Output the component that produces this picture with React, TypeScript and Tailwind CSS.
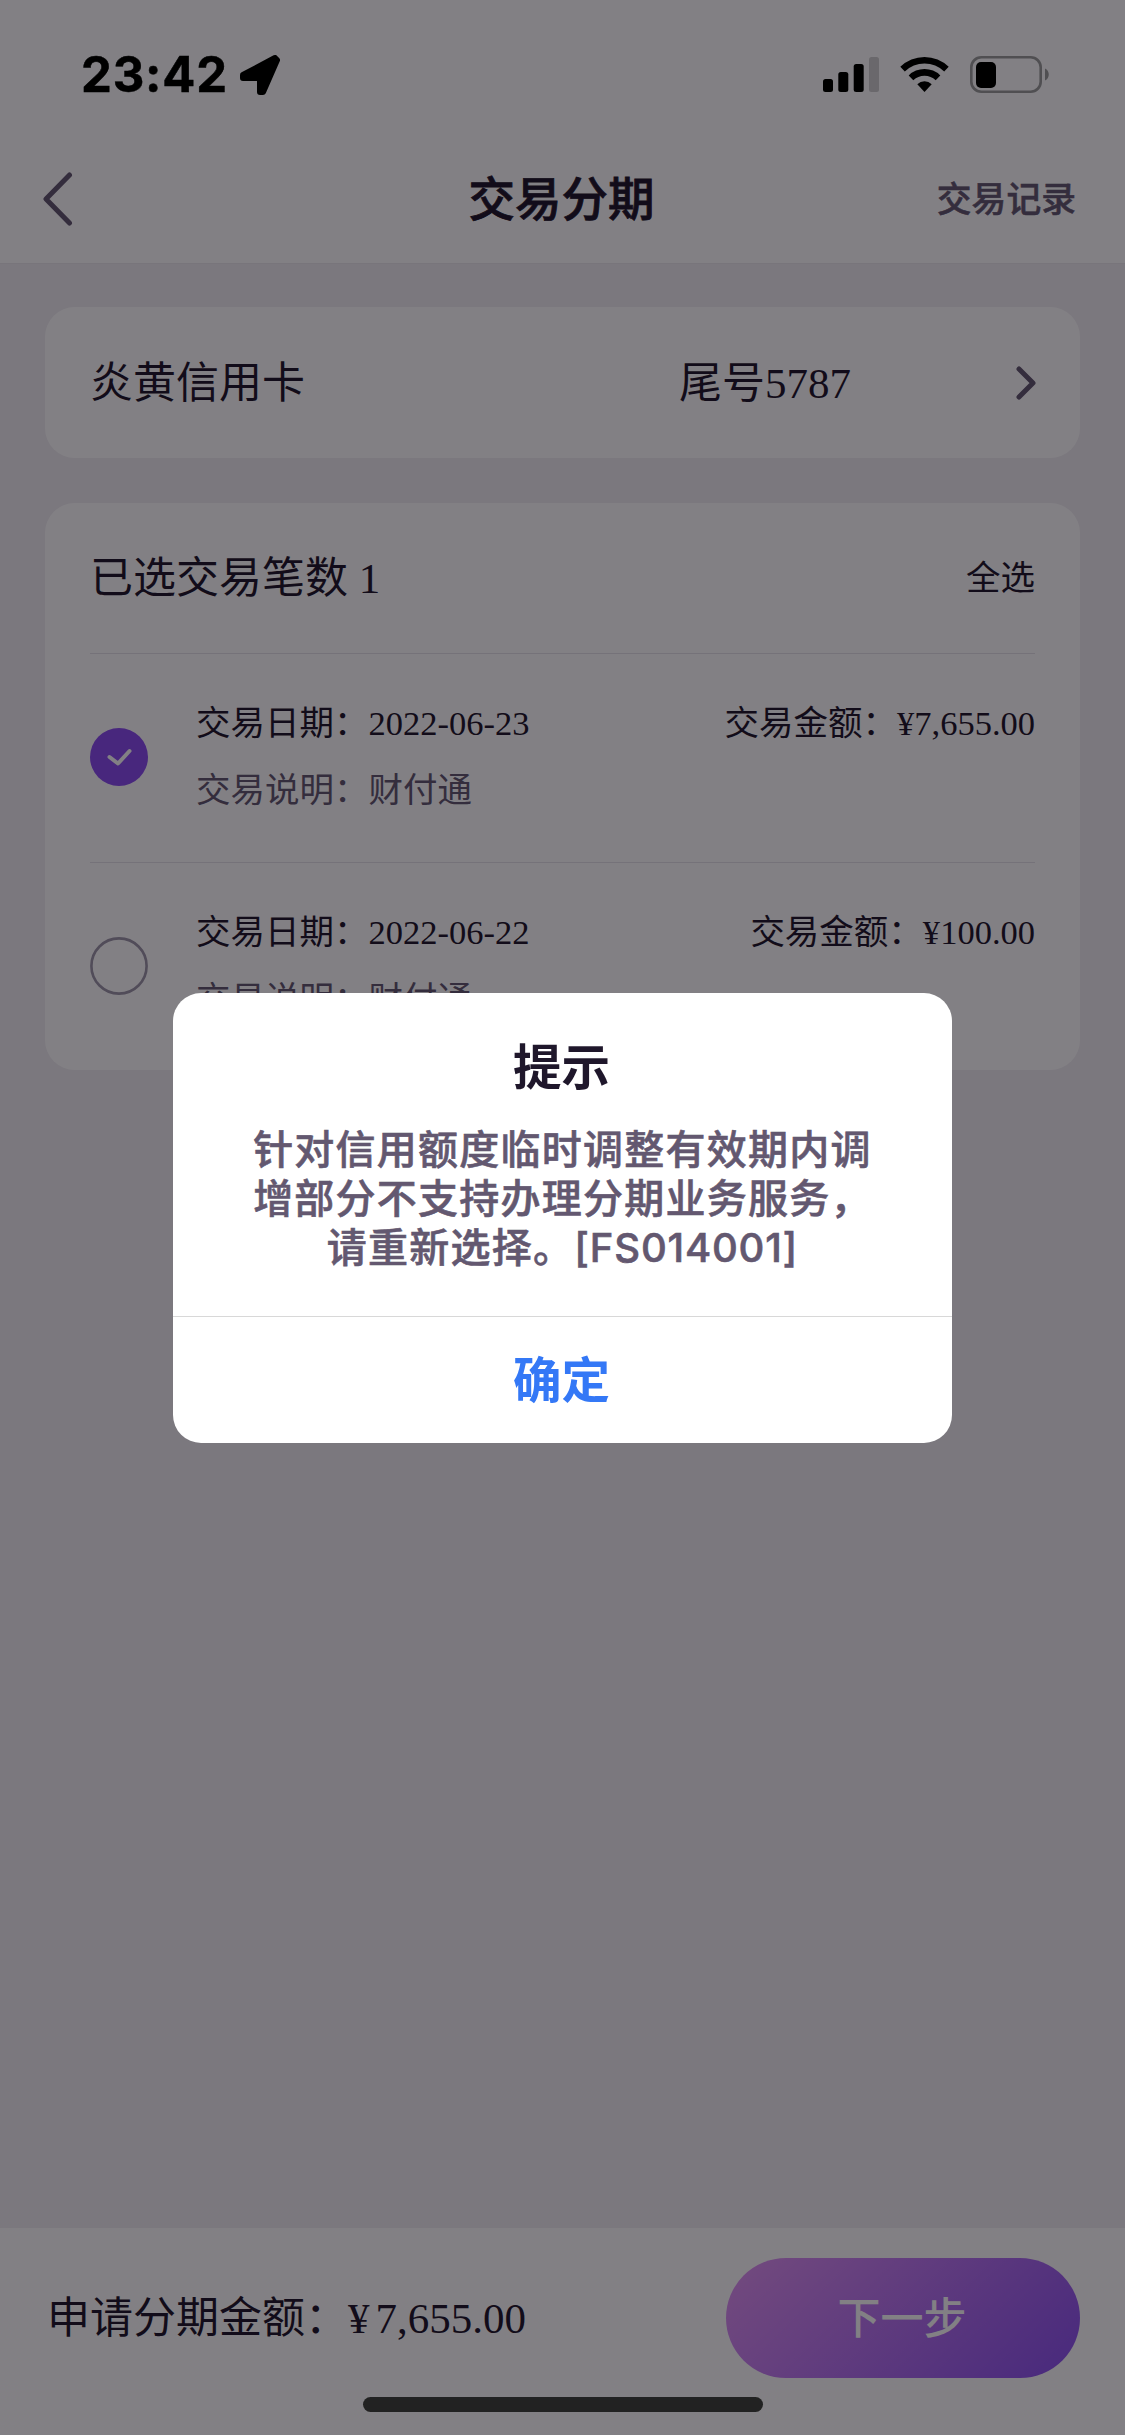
import { useState } from "react";

const initialItems = [
  { id: 1, date: "2022-06-23", desc: "财付通", amount: "7,655.00", checked: true },
  { id: 2, date: "2022-06-22", desc: "财付通", amount: "100.00", checked: false },
];

function StatusBar() {
  return (
    <div className="relative z-20 flex h-[140px] items-start justify-between pl-[81px] pr-[75px] pt-[55px] text-black">
      <div className="flex items-start">
        <span className="w-[159px] whitespace-nowrap font-['Inter',sans-serif] text-[49px] font-bold leading-[40px] tracking-[0.8px] [-webkit-text-stroke:0.5px]">
          23:42
        </span>
        <svg width="40" height="42" viewBox="0 0 40 42">
          <path
            d="M3 20 L35 3 L37 5 L23 37 L20 37 L20 23 L3 23 Z"
            fill="#000"
            stroke="#000"
            strokeWidth="6"
            strokeLinejoin="round"
          />
        </svg>
      </div>
      <div className="flex items-start pt-px">
        {/* Signal */}
        <svg width="57" height="37" viewBox="0 0 57 37">
          <rect x="0" y="23" width="10" height="13" rx="2.5" />
          <rect x="15.3" y="16" width="10" height="20" rx="2.5" />
          <rect x="30.7" y="8" width="10" height="28" rx="2.5" />
          <rect x="46" y="1" width="10" height="35" rx="2.5" fill="#6a686c" />
        </svg>
        {/* Wifi */}
        <svg width="49" height="37" viewBox="0 0 49 37" className="ml-5">
          <path d="M0.3 10.8 A34.5 34.5 0 0 1 48.7 10.8 L44.2 15.6 A28 28 0 0 0 4.8 15.6 Z" />
          <path d="M8.7 19.4 A22.5 22.5 0 0 1 40.3 19.4 L35.7 24.3 A16 16 0 0 0 13.3 24.3 Z" />
          <path d="M17.3 28.2 A10.5 10.5 0 0 1 31.7 28.2 L24.5 36 Z" />
        </svg>
        {/* Battery */}
        <svg width="80" height="38" viewBox="0 0 80 38" className="ml-[21px]">
          <rect x="1.3" y="1.3" width="69.4" height="34.4" rx="10" fill="none" stroke="#504f52" strokeWidth="2.6" />
          <rect x="6" y="6" width="20" height="26" rx="5" />
          <path d="M75 12.5 C80 14.5 80 22.5 75 24.5 Z" fill="#504f52" />
        </svg>
      </div>
    </div>
  );
}

function CheckCircle({ checked, onClick }: any) {
  return (
    <button onClick={onClick} className="mr-[48px] block h-[58px] w-[58px] shrink-0">
      {checked ? (
        <svg width="58" height="58" viewBox="0 0 58 58">
          <circle cx="29" cy="29" r="29" fill="#8a4df0" />
          <path
            d="M19.5 29 L28 35.5 L39.5 23"
            fill="none"
            stroke="#fff"
            strokeWidth="4"
            strokeLinecap="round"
            strokeLinejoin="round"
          />
        </svg>
      ) : (
        <svg width="58" height="58" viewBox="0 0 58 58">
          <circle cx="29" cy="29" r="27.6" fill="none" stroke="#9c96a8" strokeWidth="2.6" />
        </svg>
      )}
    </button>
  );
}

export default function App() {
  const [items, setItems] = useState(initialItems);
  const [showTip, setShowTip] = useState(true);

  const count = items.filter((i) => i.checked).length;

  function toggle(id: number) {
    setItems(items.map((i) => (i.id === id ? { ...i, checked: !i.checked } : i)));
  }

  return (
    <div className="relative flex h-[2435px] w-[1125px] flex-col overflow-hidden bg-[#f1eff3] font-['Liberation_Serif','Noto_Sans_CJK_SC',serif] text-[#1f172b]">
      {/* Header */}
      <header className="h-[264px] border-b border-[#eae8ec] bg-white font-['Inter','Noto_Sans_CJK_SC',sans-serif]">
        <StatusBar />
        <div className="grid h-[118px] grid-cols-3 items-center pl-[42px] pr-[49px]">
          <svg width="32" height="54" viewBox="0 0 32 54">
            <path
              d="M27.5 3 L4 27 L27.5 51"
              fill="none"
              stroke="#635870"
              strokeWidth="5"
              strokeLinecap="round"
              strokeLinejoin="round"
            />
          </svg>
          <h1 className="pl-[5px] text-center text-[46.5px] font-medium leading-[60px] [-webkit-text-stroke:0.8px]">交易分期</h1>
          <span className="text-right text-[34.8px] font-medium leading-[60px] text-[#635870] [-webkit-text-stroke:0.5px]">
            交易记录
          </span>
        </div>
      </header>

      <main className="flex flex-1 flex-col gap-[45px] px-[45px] pt-[43px]">
        {/* Card picker */}
        <section className="flex h-[151px] items-center rounded-[30px] bg-white pl-[45px] pr-[44px] text-[43px] leading-[60px]">
          <span className="w-[589px] pt-[2px]">炎黄信用卡</span>
          <span className="flex-1 pt-[2px]">尾号5787</span>
          <svg width="20" height="34" viewBox="0 0 20 34">
            <path
              d="M3 3 L17 17 L3 31"
              fill="none"
              stroke="#635870"
              strokeWidth="5"
              strokeLinecap="round"
              strokeLinejoin="round"
            />
          </svg>
        </section>

        {/* Transactions */}
        <section className="h-[567px] rounded-[30px] bg-white px-[45px]">
          <div className="flex h-[151px] items-center justify-between border-b border-[#e4e2e8]">
            <span className="pt-[2px] text-[43px] leading-[60px]">已选交易笔数 {count}</span>
            <span className="text-[34.5px] leading-[60px]">全选</span>
          </div>
          {items.map((item) => (
            <div
              key={item.id}
              className="flex h-[209px] items-center border-b border-[#e4e2e8] pb-[2px] text-[34.5px] leading-[67px] last:border-b-0 last:pb-[4px]"
            >
              <CheckCircle checked={item.checked} onClick={() => toggle(item.id)} />
              <div className="flex-1">
                <div className="flex justify-between">
                  <span>交易日期：{item.date}</span>
                  <span>交易金额：¥{item.amount}</span>
                </div>
                <div className="text-[#635870]">交易说明：{item.desc}</div>
              </div>
            </div>
          ))}
        </section>
      </main>

      {/* Bottom bar */}
      <footer className="flex h-[207px] items-start justify-between bg-white pl-[47px] pr-[45px] pt-[30px]">
        <span className="whitespace-nowrap pt-px text-[43px] leading-[120px]">
          申请分期金额：<span className="mr-[6px]">¥</span>7,655.00
        </span>
        <button className="h-[120px] w-[354px] rounded-full bg-[linear-gradient(135deg,#e194f3_0%,#8a50f0_100%)] pr-[2px] font-['Inter','Noto_Sans_CJK_SC',sans-serif] text-[43px] font-medium leading-[120px] text-white">
          下一步
        </button>
      </footer>

      {showTip && (
        <div className="absolute inset-0 z-10 flex items-center justify-center bg-[rgb(5,1,9)]/50">
          <div className="w-[779px] overflow-hidden rounded-[28px] bg-white text-center font-['Inter','Noto_Sans_CJK_SC',sans-serif]">
            <div className="h-[324px] border-b border-[#d8d8d8] pt-[45px]">
              <h2 className="pr-[2px] text-[48.5px] font-bold leading-[60px]">提示</h2>
              <p className="mt-[27px] text-[40px] font-medium leading-[49px] tracking-[1.25px] text-[#635870] [-webkit-text-stroke:0.6px]">
                针对信用额度临时调整有效期内调
                <br />
                增部分不支持办理分期业务服务，
                <br />
                请重新选择。<span className="tracking-[0.8px]">[FS014001]</span>
              </p>
            </div>
            <button
              onClick={() => setShowTip(false)}
              className="block h-[126px] w-full pr-[2px] text-[48.5px] font-bold leading-[128px] text-[#3478f6]"
            >
              确定
            </button>
          </div>
        </div>
      )}

      {/* Home indicator */}
      <div className="absolute bottom-[23px] left-[363px] z-20 h-[15px] w-[400px] rounded-full bg-[#222]" />
    </div>
  );
}
